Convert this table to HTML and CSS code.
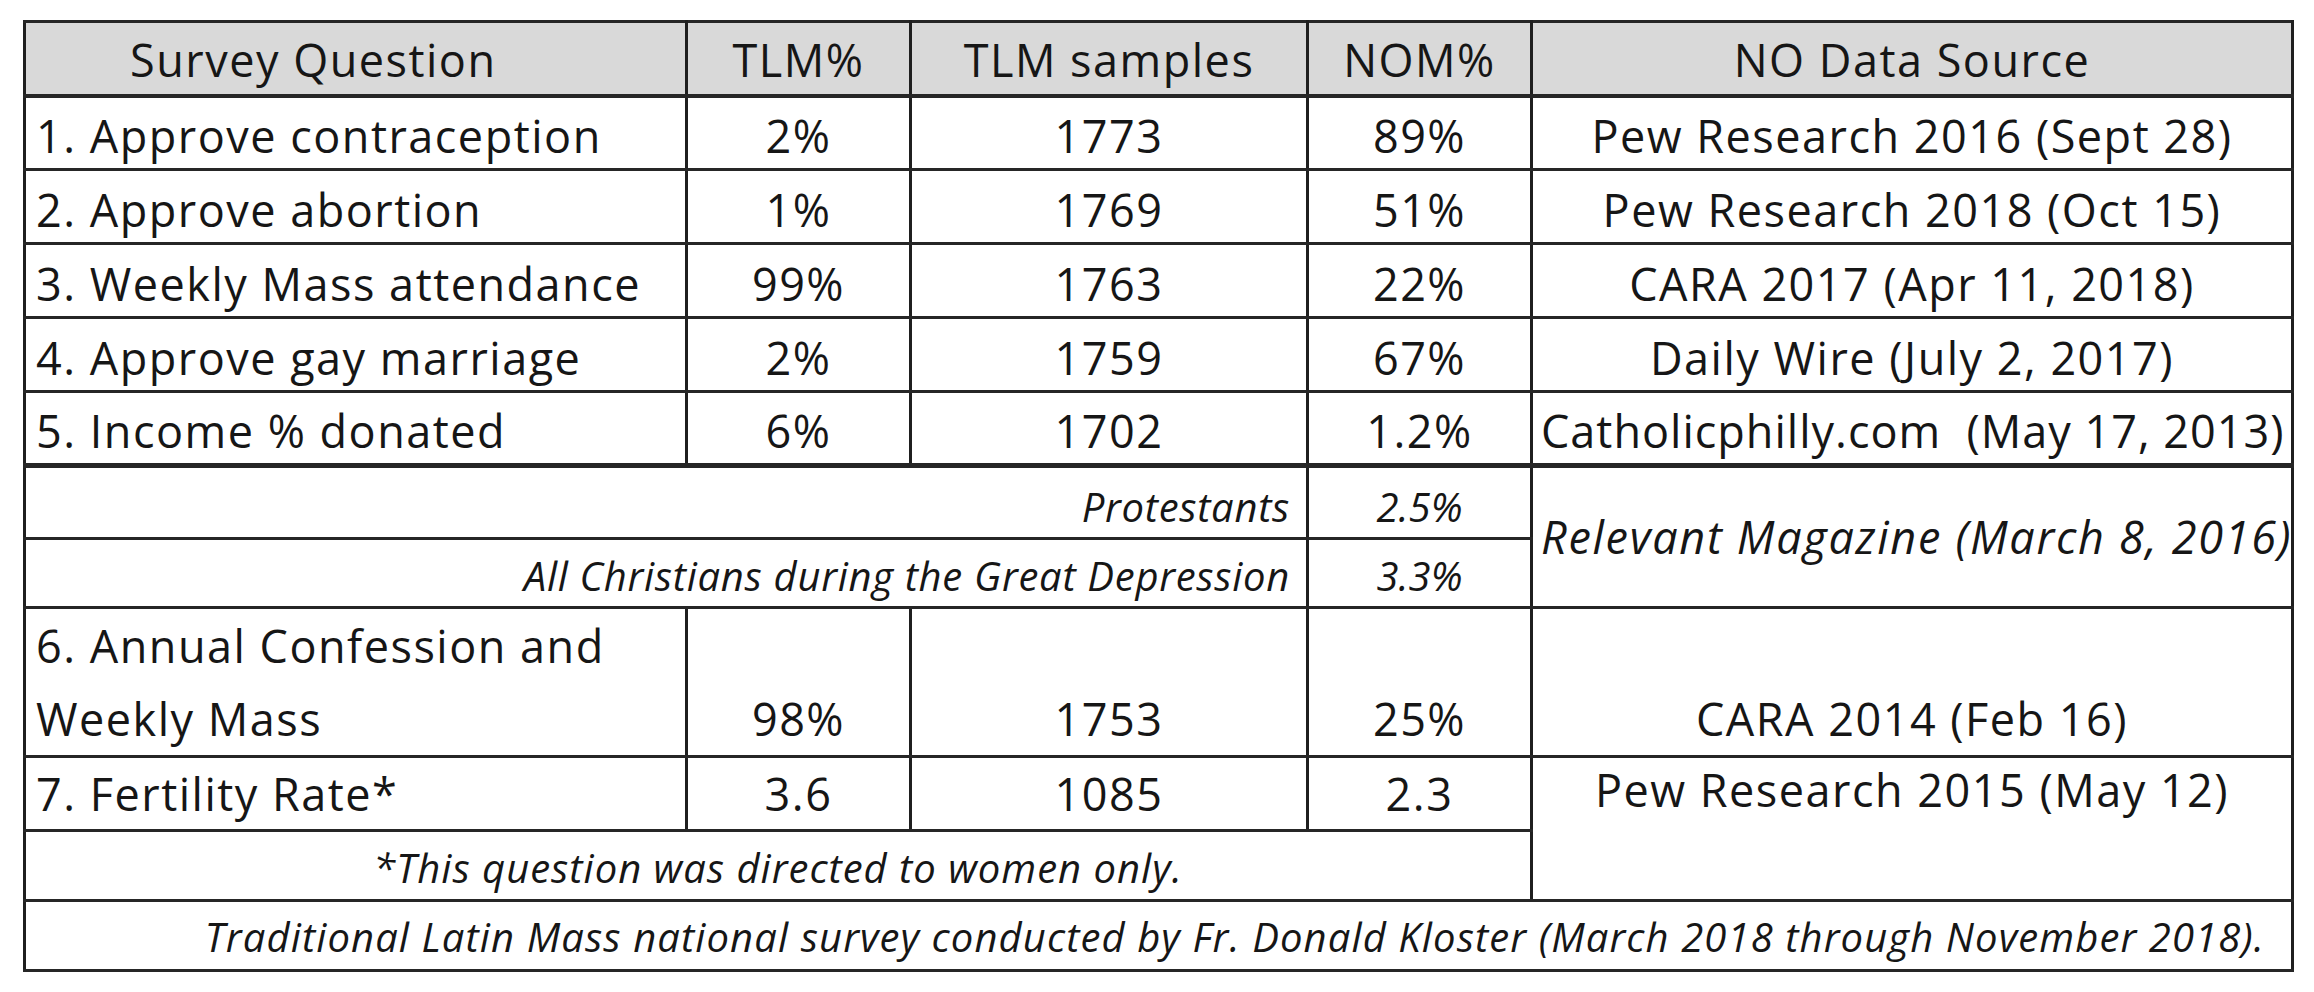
FILE: index.html
```html
<!DOCTYPE html>
<html lang="en">
<head>
<meta charset="utf-8">
<title>TLM vs NOM Survey</title>
<link rel="stylesheet" href="styles.css">
</head>
<body>
<table class="survey">
  <colgroup>
    <col class="c-q">
    <col class="c-tlm">
    <col class="c-samp">
    <col class="c-nom">
    <col class="c-src">
  </colgroup>
  <thead>
    <tr class="row head">
      <th class="hq">Survey Question</th>
      <th>TLM%</th>
      <th>TLM samples</th>
      <th>NOM%</th>
      <th>NO Data Source</th>
    </tr>
  </thead>
  <tbody>
    <tr class="row">
      <td class="q">1. Approve contraception</td><td class="num">2%</td><td class="num">1773</td><td class="num">89%</td><td class="src">Pew Research 2016 (Sept 28)</td>
    </tr>
    <tr class="row">
      <td class="q">2. Approve abortion</td><td class="num">1%</td><td class="num">1769</td><td class="num">51%</td><td class="src">Pew Research 2018 (Oct 15)</td>
    </tr>
    <tr class="row">
      <td class="q">3. Weekly Mass attendance</td><td class="num">99%</td><td class="num">1763</td><td class="num">22%</td><td class="src">CARA 2017 (Apr 11, 2018)</td>
    </tr>
    <tr class="row">
      <td class="q">4. Approve gay marriage</td><td class="num">2%</td><td class="num">1759</td><td class="num">67%</td><td class="src">Daily Wire (July 2, 2017)</td>
    </tr>
    <tr class="row sep">
      <td class="q">5. Income % donated</td><td class="num">6%</td><td class="num">1702</td><td class="num">1.2%</td><td class="src wide">Catholicphilly.com&nbsp; (May 17, 2013)</td>
    </tr>
    <tr class="row sub">
      <td class="lbl" colspan="3">Protestants</td><td class="num it">2.5%</td><td class="src rel" rowspan="2">Relevant Magazine (March 8, 2016)</td>
    </tr>
    <tr class="row sub short">
      <td class="lbl" colspan="3">All Christians during the Great Depression</td><td class="num it">3.3%</td>
    </tr>
    <tr class="row tall">
      <td class="q">6. Annual Confession and<br>Weekly Mass</td><td class="num">98%</td><td class="num">1753</td><td class="num">25%</td><td class="src">CARA 2014 (Feb 16)</td>
    </tr>
    <tr class="row fert">
      <td class="q">7. Fertility Rate*</td><td class="num">3.6</td><td class="num">1085</td><td class="num">2.3</td><td class="src top" rowspan="2">Pew Research 2015 (May 12)</td>
    </tr>
    <tr class="row short">
      <td class="note" colspan="4">*This question was directed to women only.</td>
    </tr>
  </tbody>
  <tfoot>
    <tr class="row short">
      <td class="credit" colspan="5">Traditional Latin Mass national survey conducted by Fr. Donald Kloster (March 2018 through November 2018).</td>
    </tr>
  </tfoot>
</table>
</body>
</html>
```

FILE: styles.css
```css
html, body {
  margin: 0;
  padding: 0;
  background: #ffffff;
}

body {
  padding: 20px 0 0 23px;
  font-family: "Open Sans", "Noto Sans", sans-serif;
  color: #161616;
}

.survey {
  border-collapse: collapse;
  table-layout: fixed;
  width: 2270px;
  border: 3px solid #1a1a1a;
}

.c-q { width: 662px; }
.c-tlm { width: 224px; }
.c-samp { width: 397px; }
.c-nom { width: 224px; }
.c-src { width: 761px; }

.survey th,
.survey td {
  border-top: 3px solid #262626;
  border-bottom: 3px solid #262626;
  border-left: 3px solid #1f1f1f;
  border-right: 3px solid #1f1f1f;
  font-size: 45px;
  line-height: 54px;
  letter-spacing: 1.5px;
  padding: 0 10px 5px;
  vertical-align: bottom;
  white-space: nowrap;
  overflow: hidden;
}

.row { height: 74px; }
.row.sub { height: 73px; }
.row.short { height: 70px; }
.row.sub.short { height: 69px; }
.row.tall { height: 147px; }

.survey .head th {
  background: #d9d9d9;
  font-weight: 400;
  text-align: center;
  border-bottom-width: 4px;
  padding-bottom: 7px;
}

.survey .head .hq {
  text-align: left;
  padding-left: 104px;
}

.q { text-align: left; }

.survey .tall td {
  line-height: 73px;
  padding-bottom: 0;
}

.survey .fert td { padding-bottom: 8px; }

.num { text-align: center; }

.src { text-align: center; }

.survey .src.wide {
  text-align: left;
  padding-left: 8px;
  letter-spacing: 1px;
}

.survey .sep td { border-bottom-width: 5px; }

.survey td.lbl,
.survey td.it,
.survey td.note,
.survey td.credit {
  font-style: italic;
  font-size: 40px;
  line-height: 50px;
  letter-spacing: 0;
  padding-bottom: 5px;
}

.survey td.lbl {
  text-align: right;
  padding-right: 16px;
  letter-spacing: 0.7px;
}

.survey td.it { text-align: center; }

.survey td.rel {
  vertical-align: middle;
  text-align: left;
  font-style: italic;
  padding: 0 0 0 8px;
  letter-spacing: 1.7px;
}

.survey td.top {
  vertical-align: top;
  padding-top: 5px;
  padding-bottom: 0;
}

.survey td.note {
  text-align: center;
  letter-spacing: 1px;
  padding-bottom: 6px;
}

.survey td.credit {
  text-align: right;
  padding-right: 26px;
  letter-spacing: 1.1px;
  padding-bottom: 7px;
}
```
